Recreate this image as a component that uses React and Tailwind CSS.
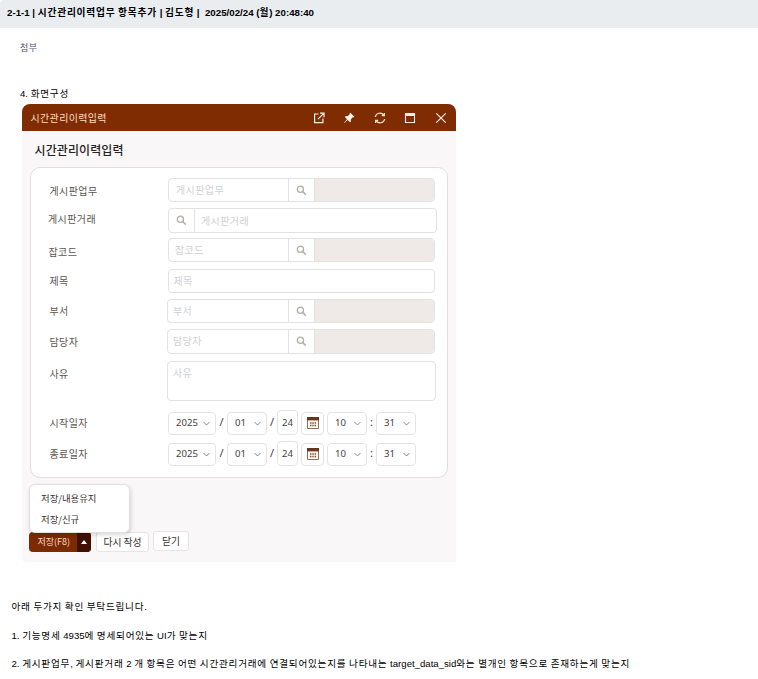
import React from "react";

const HANGUL = /([\uAC00-\uD7A3]+)/;

function Ko({ children }) {
  return children
    .split(HANGUL)
    .map((part, i) =>
      HANGUL.test(part) ? (
        <span key={i} className="tracking-[0.08em]">{part}</span>
      ) : (
        <React.Fragment key={i}>{part}</React.Fragment>
      )
    );
}

const arial = "font-['Liberation_Sans','Noto_Sans_CJK_KR',sans-serif] whitespace-pre";

function Search() {
  return (
    <svg className="h-[11px] w-[11px]" viewBox="0 0 11 11" fill="none" stroke="#b3aeaa" strokeWidth="1.3">
      <circle cx="4.4" cy="4.2" r="3.1" />
      <path d="M6.7 6.5 9.8 9.6" strokeWidth="1.6" />
    </svg>
  );
}

function Placeholder({ children, className = "" }) {
  return <span className={`text-[10px] leading-[14px] tracking-[0.4px] text-[#cfd0d3] ${className}`}>{children}</span>;
}

function Lookup({ text, pad = "pl-[7px]", className = "w-[267px] h-[24px]" }) {
  return (
    <div className={`flex overflow-hidden rounded-[4px] border border-[#e2e2e3] bg-white ${className}`}>
      <div className={`flex flex-1 items-center pb-px ${pad}`}><Placeholder>{text}</Placeholder></div>
      <div className="flex w-[27px] items-center justify-center border-x border-[#e2e2e3]"><Search /></div>
      <div className="w-[119px] bg-[#efeae8]" />
    </div>
  );
}

function Row({ label, labelClass = "", className, children }) {
  return (
    <div className={`flex ${className}`}>
      <div className={`shrink-0 text-[10px] leading-[14px] tracking-[0.4px] text-[#5d5751] ${labelClass}`}>{label}</div>
      {children}
    </div>
  );
}

function Pick({ value, className }) {
  return (
    <div className={`flex h-[23px] items-center justify-between rounded-[4px] border border-[#e4e3e2] pr-[5px] pl-[7px] ${className}`}>
      {value}
      <svg className="h-[5px] w-[7px]" viewBox="0 0 7 5" fill="none" stroke="#8b8783" strokeWidth="1"><path d="M.5 1 3.5 4 6.5 1" /></svg>
    </div>
  );
}

function DateTime() {
  return (
    <div className="flex items-center font-['Noto_Sans',sans-serif] text-[9.6px] leading-[14px] text-[#45403c]">
      <Pick value="2025" className="w-[48px]" />
      <span className="w-[11px] pb-[2px] text-center text-[11px]">/</span>
      <Pick value="01" className="w-[40px]" />
      <span className="w-[10px] pb-[2px] text-center text-[11px]">/</span>
      <div className="-mt-px flex h-[25px] w-[21px] items-center justify-center rounded-[4px] border border-[#e4e3e2] pt-px">24</div>
      <div className="ml-[3px] flex h-[23px] w-[23px] items-center justify-center rounded-[4px] border border-[#e4e3e2]">
        <svg className="h-[12px] w-[12px]" viewBox="0 0 12 12">
          <path d="M.5.5h11v11H.5z" fill="#fffaf2" stroke="#927058" />
          <path d="M0 0h12v3.4H0z" fill="#6b351b" />
          <path d="M3 5.2h1.5v1.5H3zm2.3 0h1.5v1.5H5.3zm2.3 0h1.5v1.5H7.6zM3 7.7h1.5v1.5H3zm2.3 0h1.5v1.5H5.3zm2.3 0h1.5v1.5H7.6z" fill="#7c5037" />
        </svg>
      </div>
      <Pick value="10" className="ml-[3px] w-[40px]" />
      <span className="w-[9px] pb-[3px] text-center text-[11px]">:</span>
      <Pick value="31" className="w-[40px]" />
    </div>
  );
}

function TitleIcons() {
  return (
    <div className="flex items-center gap-[16.5px] pr-[8.5px]">
      <svg className="h-[14px] w-[14px]" viewBox="0 0 14 14" fill="none" stroke="#fff0e3" strokeWidth="1.2">
        <path d="M6.5 3H2.6v8.6h8.3V7.6M8 2.2h4v4M11.8 2.4 6 8.2" />
      </svg>
      <svg className="h-[14px] w-[14px]" viewBox="0 0 14 14" fill="#fff5eb">
        <path d="M8.4 1.8 12.3 5.7 11.3 6.5 10.7 6.3 8.9 8.2 8.8 10.6 8 11.2 5.6 8.9 2.3 12 2 11.7 5 8.3 2.8 6.1 3.5 5.2 5.9 5.1 7.7 3.3 7.5 2.7Z" />
      </svg>
      <svg className="h-[14px] w-[14px]" viewBox="0 0 14 14" fill="none" stroke="#fbe3d2" strokeWidth="1.2">
        <path d="M2.3 6A4.7 4.7 0 0 1 10.8 4.2M11.7 8A4.7 4.7 0 0 1 3.2 9.8M11.4 2v2.6H8.8M2.6 12V9.4h2.6" />
      </svg>
      <svg className="h-[14px] w-[14px]" viewBox="0 0 14 14" fill="none" stroke="#fff0e3" strokeWidth="1.1">
        <path d="M2.5 2.5h9v9h-9z" /><path d="M2 3.6h10" strokeWidth="3" />
      </svg>
      <svg className="h-[14px] w-[14px]" viewBox="0 0 14 14" fill="none" stroke="#fff0e3" strokeWidth="1.2">
        <path d="M2.3 2.3l9.4 9.4M11.7 2.3 2.3 11.7" />
      </svg>
    </div>
  );
}

function Dialog() {
  return (
    <div className="ml-[22px] flex h-[458px] w-[434px] flex-col overflow-hidden rounded-t-[8px] rounded-bl-[4px] bg-[#f9f7f8] font-['Noto_Sans_CJK_KR',sans-serif]">
      <div className="flex h-[27px] shrink-0 items-center justify-between bg-[#7f2c03] pl-[8.5px]">
        <span className="text-[10px] leading-[14px] tracking-[0.35px] text-[#fbdcc6]">시간관리이력입력</span>
        <TitleIcons />
      </div>
      <h1 className="mt-[10px] ml-[12.5px] text-[12px] leading-[18px] font-medium tracking-[0.1px] text-[#27221f]">시간관리이력입력</h1>
      <div className="mt-[8px] ml-[8px] h-[311px] w-[418px] shrink-0 rounded-[10px] border border-[#dfddde] bg-white pt-[10px]">
        <Row label="게시판업무" className="h-[24px]" labelClass="w-[137px] pl-[18.5px] pt-[6px]">
          <Lookup text="게시판업무" />
        </Row>
        <Row label="게시판거래" className="mt-[6px] h-[25px]" labelClass="w-[137px] pl-[17px] pt-[4px]">
          <div className="flex w-[269px] rounded-[4px] border border-[#e2e2e3]">
            <div className="flex w-[26px] items-center justify-center border-r border-[#e2e2e3]"><Search /></div>
            <div className="flex items-center pl-[6px]"><Placeholder>게시판거래</Placeholder></div>
          </div>
        </Row>
        <Row label="잡코드" className="mt-[5px] h-[24px]" labelClass="w-[137px] pl-[17.5px] pt-[7px]">
          <Lookup text="잡코드" pad="pl-[6px]" />
        </Row>
        <Row label="제목" className="mt-[7px] h-[24px]" labelClass="w-[137px] pl-[18.5px] pt-[5px]">
          <div className="flex w-[267px] items-center rounded-[4px] border border-[#e2e2e3] pl-[4.5px]"><Placeholder>제목</Placeholder></div>
        </Row>
        <Row label="부서" className="mt-[6px] h-[24px]" labelClass="w-[136px] pl-[18.5px] pt-[5px]">
          <Lookup text="부서" pad="pl-[5px]" className="h-[24px] w-[268px]" />
        </Row>
        <Row label="담당자" className="mt-[6px] h-[25px]" labelClass="w-[136px] pl-[18.5px] pt-[6px]">
          <Lookup text="담당자" pad="pl-[5px]" className="h-[25px] w-[268px]" />
        </Row>
        <Row label="사유" className="mt-[7px] h-[40px]" labelClass="w-[136px] pl-[18.5px] pt-[6px]">
          <div className="w-[269px] rounded-[4px] border border-[#e2e2e3] pt-[4px] pl-[5px] leading-[14px]"><Placeholder>사유</Placeholder></div>
        </Row>
        <Row label="시작일자" className="mt-[10px] h-[24px]" labelClass="w-[137px] pl-[18.5px] pt-[5px]"><DateTime /></Row>
        <Row label="종료일자" className="mt-[7px] h-[24px]" labelClass="w-[137px] pl-[18.5px] pt-[5px]"><DateTime /></Row>
      </div>
      <div className="relative mt-[54px] ml-[7px] flex items-start text-[9.8px] leading-[14px] text-[#39312d]">
        <div className="flex h-[20px] w-[62px] overflow-hidden rounded-[4px] bg-[#7c2a04] text-[#fbdcc6]">
          <span className="flex w-[48px] items-center pb-px pl-[8.5px] text-[9px]">저장(F8)</span>
          <span className="flex flex-1 items-center justify-center bg-[#3f1003]">
            <svg className="h-[4px] w-[6px]" viewBox="0 0 6 4" fill="#fff"><path d="M0 4 3 0 6 4Z" /></svg>
          </span>
        </div>
        <div className="ml-[5px] flex h-[20px] w-[53px] items-center justify-center rounded-[3px] border border-[#e7e4e4] bg-white">다시 작성</div>
        <div className="-mt-px ml-[4px] flex h-[20px] w-[36px] items-center justify-center rounded-[3px] border border-[#e7e4e4] bg-white">닫기</div>
        <div className="absolute bottom-[19px] left-0 h-[49px] w-[101px] rounded-[6px] border border-[#e3dfdf] bg-white pt-[5px] pl-[11px] text-[9.4px] shadow-[1px_2px_4px_rgba(0,0,0,0.15)]">
          <div className="h-[21px] leading-[16px]">저장/내용유지</div>
          <div className="leading-[16px]">저장/신규</div>
        </div>
      </div>
    </div>
  );
}

export default function App() {
  return (
    <div className="h-[679px] w-[758px] overflow-hidden bg-white text-[9.6px] text-black">
      <header className={`h-[28px] rounded-tl-[4px] bg-[#e9edf0] pt-[6px] pl-[7px] text-[9.71px] leading-[14px] font-bold ${arial}`}>
        <Ko>{"2-1-1 | 시간관리이력업무 항목추가 | 김도형 |  2025/02/24 (월) 20:48:40"}</Ko>
      </header>
      <div className={`mt-[13px] pl-[20px] text-[9px] leading-[14px] tracking-[0.5px] text-[#4b5373] ${arial}`}>첨부</div>
      <div className={`mt-[32px] mb-[3px] pl-[20px] leading-[14px] ${arial}`}><Ko>4. 화면구성</Ko></div>
      <Dialog />
      <div className={`mt-[38px] flex flex-col gap-[14.5px] pl-[11.5px] leading-[14px] ${arial}`}>
        <p><Ko>아래 두가지 확인 부탁드립니다.</Ko></p>
        <p><Ko>1. 기능명세 4935에 명세되어있는 UI가 맞는지</Ko></p>
        <p><Ko>2. 게시판업무, 게시판거래 2 개 항목은 어떤 시간관리거래에 연결되어있는지를 나타내는 target_data_sid와는 별개인 항목으로 존재하는게 맞는지</Ko></p>
      </div>
    </div>
  );
}
